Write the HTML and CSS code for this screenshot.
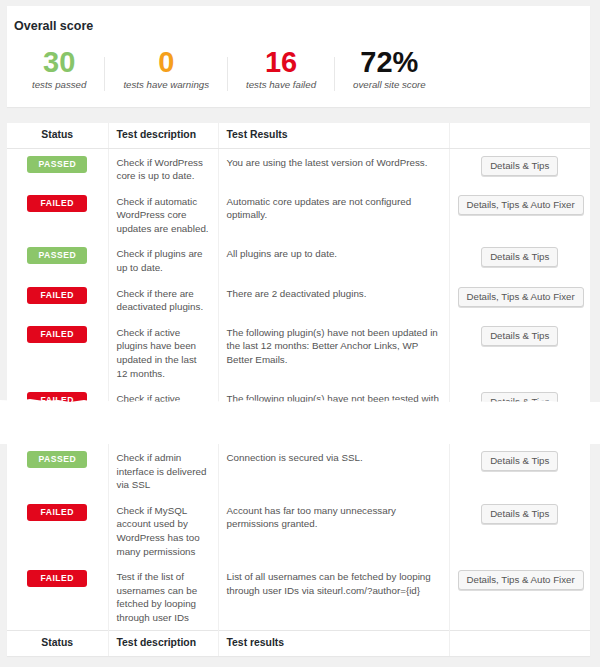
FILE: index.html
```html
<!DOCTYPE html>
<html lang="en">
<head>
    <meta charset="UTF-8">
    <meta name="viewport" content="width=device-width, initial-scale=1.0">
    <title>Security scan</title>
    <link rel="stylesheet" href="styles.css">
</head>
<body>
    <main class="wrap">
        <!-- overall score -->
        <div class="scorebox">
            <h3>Overall score</h3>
            <div class="scores">
                <div class="score"><b class="green">30</b><i>tests passed</i></div>
                <span class="sep"></span>
                <div class="score"><b class="orange">0</b><i>tests have warnings</i></div>
                <span class="sep"></span>
                <div class="score"><b class="red">16</b><i>tests have failed</i></div>
                <span class="sep"></span>
                <div class="score"><b>72%</b><i>overall site score</i></div>
            </div>
        </div>

        <!-- test list, first part -->
        <div class="tablebox top">
            <table class="tests">
                <colgroup>
                    <col class="c1"><col class="c2"><col class="c3"><col class="c4">
                </colgroup>
                <thead>
                    <tr><th>Status</th><th class="left">Test description</th><th class="left">Test Results</th><th></th></tr>
                </thead>
                <tbody>
                    <tr>
                        <td class="status"><span class="badge passed">PASSED</span></td>
                        <td class="desc">Check if WordPress core is up to date.</td>
                        <td class="result">You are using the latest version of WordPress.</td>
                        <td class="action"><span class="btn">Details &amp; Tips</span></td>
                    </tr>
                    <tr>
                        <td class="status"><span class="badge failed">FAILED</span></td>
                        <td class="desc">Check if automatic WordPress core updates are enabled.</td>
                        <td class="result">Automatic core updates are not configured optimally.</td>
                        <td class="action"><span class="btn">Details, Tips &amp; Auto Fixer</span></td>
                    </tr>
                    <tr>
                        <td class="status"><span class="badge passed">PASSED</span></td>
                        <td class="desc">Check if plugins are up to date.</td>
                        <td class="result">All plugins are up to date.</td>
                        <td class="action"><span class="btn">Details &amp; Tips</span></td>
                    </tr>
                    <tr>
                        <td class="status"><span class="badge failed">FAILED</span></td>
                        <td class="desc">Check if there are deactivated plugins.</td>
                        <td class="result">There are 2 deactivated plugins.</td>
                        <td class="action"><span class="btn">Details, Tips &amp; Auto Fixer</span></td>
                    </tr>
                    <tr>
                        <td class="status"><span class="badge failed">FAILED</span></td>
                        <td class="desc">Check if active plugins have been updated in the last 12 months.</td>
                        <td class="result">The following plugin(s) have not been updated in the last 12 months: Better Anchor Links, WP Better Emails.</td>
                        <td class="action"><span class="btn">Details &amp; Tips</span></td>
                    </tr>
                    <tr>
                        <td class="status"><span class="badge failed">FAILED</span></td>
                        <td class="desc">Check if active plugins have been tested with the current version.</td>
                        <td class="result">The following plugin(s) have not been tested with the current WordPress version.</td>
                        <td class="action"><span class="btn">Details &amp; Tips</span></td>
                    </tr>
                </tbody>
            </table>
        </div>

        <!-- torn edge -->
        <div class="tear">
            <svg width="600" height="6" viewBox="0 0 600 6">
                <polygon fill="#fff" points="0,2 18,3 30,1 44,3 58,2 70,4 84,2 96,4 110,3 128,4 146,2 160,4 176,3 194,4 212,3 230,4 250,2 268,4 286,3 304,4 322,2 340,4 360,3 378,4 396,2 414,4 432,3 450,4 468,2 486,4 504,3 522,4 540,2 560,4 578,4 590,5 600,4 600,6 0,6"/>
            </svg>
        </div>

        <!-- test list, last part -->
        <div class="tablebox bottom">
            <table class="tests">
                <colgroup>
                    <col class="c1"><col class="c2"><col class="c3"><col class="c4">
                </colgroup>
                <tbody>
                    <tr>
                        <td class="status"><span class="badge passed">PASSED</span></td>
                        <td class="desc">Check if admin interface is delivered via SSL</td>
                        <td class="result">Connection is secured via SSL.</td>
                        <td class="action"><span class="btn">Details &amp; Tips</span></td>
                    </tr>
                    <tr>
                        <td class="status"><span class="badge failed">FAILED</span></td>
                        <td class="desc">Check if MySQL account used by WordPress has too many permissions</td>
                        <td class="result">Account has far too many unnecessary permissions granted.</td>
                        <td class="action"><span class="btn">Details &amp; Tips</span></td>
                    </tr>
                    <tr>
                        <td class="status"><span class="badge failed">FAILED</span></td>
                        <td class="desc">Test if the list of usernames can be fetched by looping through user IDs</td>
                        <td class="result">List of all usernames can be fetched by looping through user IDs via siteurl.com/?author={id}</td>
                        <td class="action"><span class="btn">Details, Tips &amp; Auto Fixer</span></td>
                    </tr>
                </tbody>
                <tfoot>
                    <tr><th>Status</th><th class="left">Test description</th><th class="left">Test results</th><th></th></tr>
                </tfoot>
            </table>
        </div>
    </main>
</body>
</html>
```

FILE: styles.css
```css
*{
    margin: 0;
    padding: 0;
    box-sizing: border-box;
}
body{
    background: #f1f1f1;
    font-family: "Liberation Sans", Arial, sans-serif;
    color: #555;
}
.wrap{
    width: 600px;
    padding: 6px 0 10px 7px;
}
/* overall score */
.scorebox{
    width: 583px;
    height: 101px;
    padding: 13px 0 0 7px;
    background: #fff;
    box-shadow: 0 1px 1px rgba(0,0,0,.04);
}
.scorebox h3{
    font-size: 12.5px;
    line-height: 15px;
    font-weight: bold;
    color: #23282d;
}
.scores{
    display: flex;
    align-items: flex-end;
    margin-top: 14px;
}
.score{
    display: flex;
    flex-direction: column;
    align-items: center;
    padding: 0 18px;
}
.score b{
    font-size: 29px;
    line-height: 29px;
    color: #111;
}
.score i{
    font-size: 9.7px;
    line-height: 12px;
    margin-top: 2px;
    color: #555;
}
.score .green{
    color: #88c56a;
}
.score .orange{
    color: #f5a01c;
}
.score .red{
    color: #e2061c;
}
.sep{
    width: 1px;
    height: 34px;
    background: #e8e8e8;
}
/* table */
.tablebox{
    width: 583px;
    background: #fff;
}
.tablebox.top{
    margin-top: 16px;
    height: 279px;
    overflow: hidden;
}
.tablebox.bottom{
    box-shadow: 0 1px 1px rgba(0,0,0,.04);
}
.tests{
    width: 583px;
    table-layout: fixed;
    border-collapse: collapse;
    font-size: 9.8px;
    line-height: 13.6px;
}
.tests .c1{
    width: 101px;
}
.tests .c2{
    width: 110px;
}
.tests .c3{
    width: 231px;
}
.tests .c4{
    width: 141px;
}
.tests th{
    height: 25px;
    padding: 0 8px;
    font-size: 10.4px;
    font-weight: bold;
    color: #23282d;
    text-align: center;
    border-left: 1px solid #f0f0f0;
}
.tests th:first-child,
.tests td:first-child{
    border-left: none;
}
.tests th.left{
    text-align: left;
}
.tests thead th{
    border-bottom: 1px solid #e6e6e6;
}
.tests tfoot th{
    height: 26px;
    border-top: 1px solid #e6e6e6;
}
.tests td{
    padding: 7px 8px 5px 8px;
    vertical-align: top;
    border-left: 1px solid #f0f0f0;
}
.tests td.result{
    padding-right: 6px;
}
.tests td.status,
.tests td.action{
    text-align: center;
}
.badge{
    display: block;
    width: 60px;
    height: 17px;
    margin: 0 auto;
    line-height: 17px;
    border-radius: 3px;
    font-size: 8.6px;
    font-weight: bold;
    letter-spacing: .5px;
    color: #fff;
}
.badge.passed{
    background: #8cc66a;
}
.badge.failed{
    background: #e2061c;
}
.btn{
    display: inline-block;
    vertical-align: top;
    height: 20px;
    padding: 0 8px;
    line-height: 18px;
    font-size: 9.7px;
    color: #555;
    background: #f7f7f7;
    border: 1px solid #d2d2d2;
    border-radius: 3px;
    box-shadow: 0 1px 0 #ddd;
    white-space: nowrap;
}
/* torn edge between the two parts */
.tear{
    position: relative;
    width: 600px;
    height: 42px;
    margin-left: -7px;
    background: #fff;
}
.tear svg{
    position: absolute;
    left: 0;
    top: -4px;
}
```
